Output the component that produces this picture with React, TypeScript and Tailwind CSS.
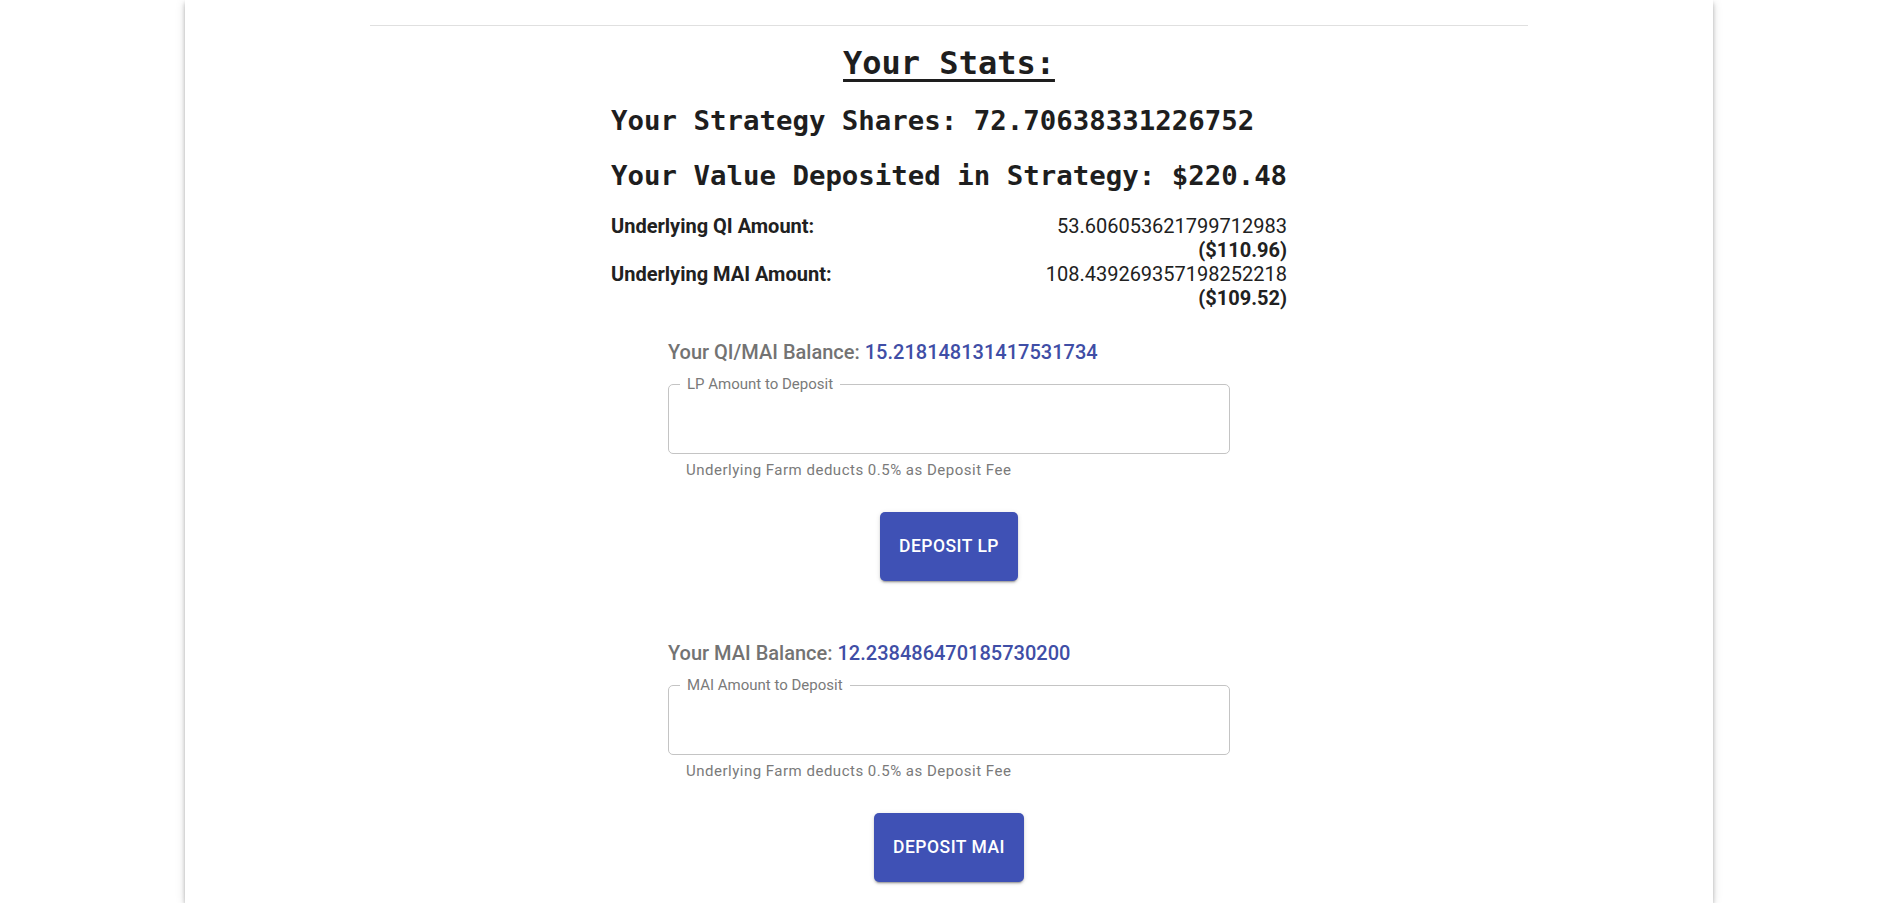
import React from "react";

const mono = { fontFamily: '"DejaVu Sans Mono", "Liberation Mono", monospace' };

function DepositBlock({
  balanceLabel,
  balance,
  inputLabel,
  button,
  mt,
}: {
  balanceLabel: string;
  balance: string;
  inputLabel: string;
  button: string;
  mt: string;
}) {
  return (
    <div className={`w-[562px] mx-auto flex flex-col ${mt}`}>
      <div className="h-[28px] leading-[28px] text-[20px] font-medium text-[#737373] whitespace-nowrap">
        {balanceLabel} <span className="text-[#3f4ea6]">{balance}</span>
      </div>
      <div className="relative mt-[18px] h-[70px] rounded-[5px] border border-[#c4c4c4]">
        <span className="absolute left-[11px] top-[-10px] bg-white px-[7px] text-[15px] leading-[18px] text-[#7a7a7a]">
          {inputLabel}
        </span>
      </div>
      <div className="mt-[6px] h-[20px] leading-[20px] pl-[18px] text-[15px] text-[#7a7a7a] tracking-[0.5px] whitespace-nowrap">
        Underlying Farm deducts 0.5% as Deposit Fee
      </div>
      <div className="mt-[32px] flex justify-center">
        <button className="h-[69px] px-[19px] rounded-[5px] bg-[#3f51b5] text-white text-[17.5px] font-medium uppercase tracking-[0.5px] shadow-[0_3px_1px_-2px_rgba(0,0,0,0.2),0_2px_2px_0_rgba(0,0,0,0.14),0_1px_5px_0_rgba(0,0,0,0.12)]">
          {button}
        </button>
      </div>
    </div>
  );
}

export default function App() {
  return (
    <div
      className="min-h-screen bg-white pl-[185px]"
      style={{ fontFamily: 'Roboto, "Noto Sans", Arial, sans-serif' }}
    >
      <div className="w-[1528px] min-h-[903px] bg-white pt-[25px] shadow-[0_2px_4px_-1px_rgba(0,0,0,0.2),0_4px_5px_0_rgba(0,0,0,0.14),0_1px_10px_0_rgba(0,0,0,0.12)]">
        <div className="mx-[185px] border-t border-[#e0e0e0]" />

        <div
          className="mt-[17px] text-center text-[32px] leading-[40px] font-bold underline underline-offset-[5px] decoration-[3px] text-[#1e1e1e]"
          style={mono}
        >
          Your Stats:
        </div>

        <div className="w-[676px] mx-auto">
          <div
            className="mt-[20px] text-[27.4px] leading-[36px] font-bold text-[#1e1e1e] whitespace-nowrap"
            style={mono}
          >
            Your Strategy Shares: 72.70638331226752
          </div>
          <div
            className="mt-[19px] text-[27.4px] leading-[36px] font-bold text-[#1e1e1e] whitespace-nowrap"
            style={mono}
          >
            Your Value Deposited in Strategy: $220.48
          </div>

          <div className="mt-[20px] grid grid-cols-2 text-[20px] leading-[24px] text-[#212121]">
            <div className="font-bold">Underlying QI Amount:</div>
            <div className="text-right">
              53.606053621799712983
              <br />
              <span className="font-bold">($110.96)</span>
            </div>
            <div className="font-bold">Underlying MAI Amount:</div>
            <div className="text-right">
              108.43926935719825221{"8"}
              <br />
              <span className="font-bold">($109.52)</span>
            </div>
          </div>
        </div>

        <DepositBlock
          mt="mt-[28px]"
          balanceLabel="Your QI/MAI Balance:"
          balance="15.218148131417531734"
          inputLabel="LP Amount to Deposit"
          button="Deposit LP"
        />
        <DepositBlock
          mt="mt-[58px]"
          balanceLabel="Your MAI Balance:"
          balance="12.238486470185730200"
          inputLabel="MAI Amount to Deposit"
          button="Deposit MAI"
        />
      </div>
    </div>
  );
}
